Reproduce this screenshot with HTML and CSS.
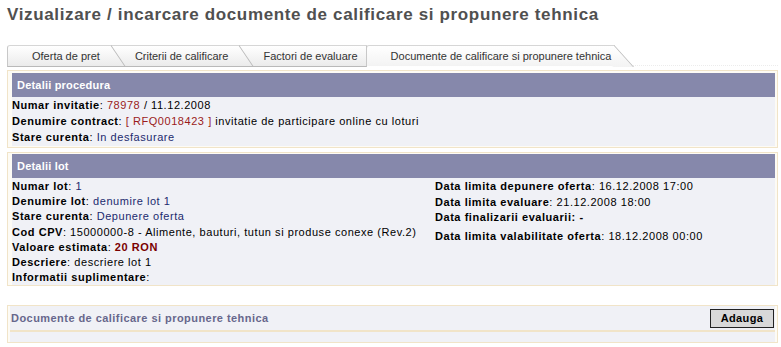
FILE: index.html
```html
<!DOCTYPE html>
<html>
<head>
<meta charset="utf-8">
<link rel="stylesheet" href="styles.css">
</head>
<body>
<div class="page">
  <h1 class="title">Vizualizare / incarcare documente de calificare si propunere tehnica</h1>
  <div class="tabs">
    <div class="tab t1">Oferta de pret</div>
    <div class="tab t2">Criterii de calificare</div>
    <div class="tab t3">Factori de evaluare</div>
    <div class="tab active">Documente de calificare si propunere tehnica</div>
    <div class="tab-rest"></div>
  </div>

  <div class="panel p1">
    <div class="panel-head">Detalii procedura</div>
    <div class="panel-body">
      <div class="row"><b>Numar invitatie</b>: <span class="red">78978</span> / 11.12.2008</div>
      <div class="row"><b>Denumire contract</b>: <span class="red">[ RFQ0018423 ]</span> invitatie de participare online cu loturi</div>
      <div class="row"><b>Stare curenta</b>: <span class="blue">In desfasurare</span></div>
    </div>
  </div>

  <div class="panel p2">
    <div class="panel-head">Detalii lot</div>
    <div class="panel-body lot">
      <div class="col left">
        <div class="row"><b>Numar lot</b>: <span class="blue">1</span></div>
        <div class="row"><b>Denumire lot</b>: <span class="blue">denumire lot 1</span></div>
        <div class="row"><b>Stare curenta</b>: <span class="blue">Depunere oferta</span></div>
        <div class="row"><b>Cod CPV</b>: 15000000-8 - Alimente, bauturi, tutun si produse conexe (Rev.2)</div>
        <div class="row"><b>Valoare estimata</b>: <b class="dred">20 RON</b></div>
        <div class="row"><b>Descriere</b>: descriere lot 1</div>
        <div class="row"><b>Informatii suplimentare</b>:</div>
      </div>
      <div class="col right">
        <div class="row"><b>Data limita depunere oferta</b>: 16.12.2008 17:00</div>
        <div class="row"><b>Data limita evaluare</b>: 21.12.2008 18:00</div>
        <div class="row"><b>Data finalizarii evaluarii: -</b></div>
        <div class="row last"><b>Data limita valabilitate oferta</b>: 18.12.2008 00:00</div>
      </div>
    </div>
  </div>

  <div class="panel p3">
    <div class="docs-head">
      <span class="docs-title">Documente de calificare si propunere tehnica</span>
      <button class="btn">Adauga</button>
    </div>
    <div class="docs-body"></div>
  </div>
</div>
</body>
</html>
```

FILE: styles.css
```css
html, body {
  margin: 0;
  padding: 0;
  background: #ffffff;
}

.page {
  padding: 4px 3px 0 7px;
  font-family: "Liberation Sans", Arial, sans-serif;
  font-size: 11px;
  color: #000;
}

.title {
  margin: 0;
  font-size: 17px;
  line-height: 22px;
  letter-spacing: 0.65px;
  font-weight: bold;
  color: #505050;
}

/* Tabs */
.tabs {
  display: flex;
  margin-top: 19px;
  height: 22px;
}

.tab {
  position: relative;
  height: 20px;
  line-height: 20px;
  padding: 0 12px 0 24px;
  border-top: 1px solid #d6d6d6;
  border-bottom: 1px solid #b9b9b9;
  background: linear-gradient(#ffffff, #ebebeb);
  color: #333333;
  white-space: nowrap;
}

.tab::after {
  content: "";
  position: absolute;
  z-index: -1;
  left: 100%;
  top: -1px;
  bottom: -1px;
  width: 16px;
  margin-left: -1px;
  background: linear-gradient(#ffffff, #ebebeb);
  border-top: 1px solid #d6d6d6;
  border-right: 1px solid #b9b9b9;
  border-bottom: 1px solid #b9b9b9;
  box-sizing: border-box;
  transform-origin: bottom left;
  transform: skewX(34deg);
}

.tab.t1 {
  z-index: 4;
  padding-right: 11px;
  border-left: 1px solid #c8c8c8;
  border-top-left-radius: 3px;
}
.tab.t2 { z-index: 3; padding-right: 11px; }
.tab.t3 { z-index: 2; padding-right: 8px; }

.tab.active {
  z-index: 5;
  border-left: 1px solid #c8c8c8;
  border-bottom: 1px solid transparent;
  background: linear-gradient(#ffffff, #f3f3f3);
  padding-right: 3px;
  border-top-left-radius: 3px;
}
.tab.active::after {
  width: 21px;
  background: linear-gradient(#ffffff, #f3f3f3);
  border-bottom: 0;
  transform: skewX(42deg);
}

.tab-rest {
  flex: 1;
  border-bottom: 1px dotted #ececec;
  margin-bottom: 1px;
}

/* Panels */
.panel {
  border: 1px solid #f1e4c8;
  background: #fdfbf5;
  padding: 2px 2px 1px 4px;
}

.panel-head {
  height: 24px;
  line-height: 24px;
  background: #8688ab;
  color: #ffffff;
  font-weight: bold;
  font-size: 11px;
  letter-spacing: 0.2px;
  padding-left: 5px;
}

.panel-body {
  background: #f0f1f6;
  padding: 0 0 1px 0;
  letter-spacing: 0.55px;
}

.row {
  line-height: 16px;
  white-space: nowrap;
}

.p1 {
  margin-top: 3px;
}

.p2 {
  margin-top: 4px;
  padding-top: 1px;
  padding-bottom: 0;
}

.lot {
  display: grid;
  grid-template-columns: 423px 1fr;
  padding: 1px 0 0 0;
}

.lot .left .row {
  line-height: 15.2px;
}

.lot .right .row {
  line-height: 15.5px;
}
.lot .right .row.last {
  margin-top: 3px;
}

.red {
  color: #9b1b1b;
}
.dred {
  color: #7a0000;
}
.blue {
  color: #1c2a6e;
}

/* Documents panel */
.p3 {
  margin-top: 19px;
  padding: 0 2px 0 2px;
}

.docs-head {
  display: flex;
  align-items: center;
  justify-content: space-between;
  height: 24px;
  background: #f0f1f6;
  border-bottom: 2px solid #f1e4c8;
  padding: 0 1px 0 1px;
}

.docs-title {
  font-weight: bold;
  font-size: 11px;
  letter-spacing: 0.45px;
  color: #67678c;
}

.btn {
  font-family: "Liberation Sans", Arial, sans-serif;
  font-size: 11px;
  font-weight: bold;
  letter-spacing: 0.4px;
  color: #000;
  background: #d8d8d8;
  border: 1px solid #222222;
  height: 19px;
  width: 64px;
  padding: 0;
  margin: 0;
}

.docs-body {
  height: 10px;
  background: #f0f1f6;
}
```
